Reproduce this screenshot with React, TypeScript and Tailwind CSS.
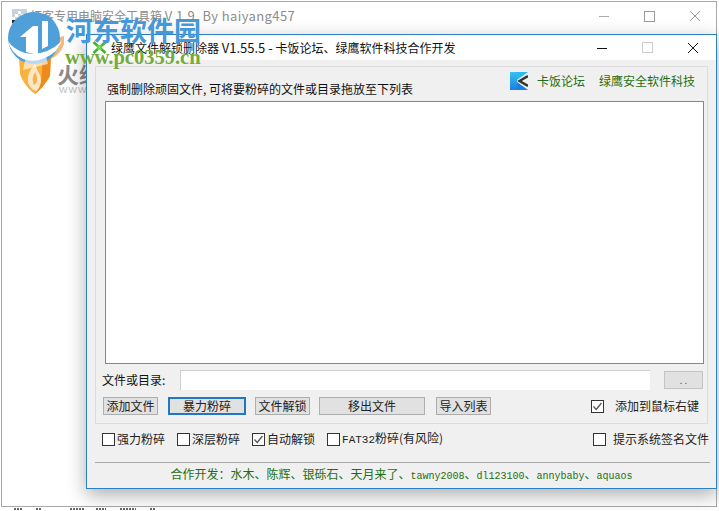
import React from "react";

const cjk = "font-['Noto_Sans_CJK_SC','Liberation_Sans',sans-serif]";
const mono = "font-['Liberation_Mono',monospace] text-[10px]";

function Btn({ w, label, primary }: { w: string; label: string; primary?: boolean }) {
  return (
    <div
      className={`${w} h-[18px] flex items-center justify-center text-[12px] text-[#222] bg-[#e1e1e1] ${
        primary ? "border-2 border-[#1f78c1]" : "border border-[#adadad]"
      }`}
    >
      {label}
    </div>
  );
}

function Check({ label, checked, gap = "gap-[2px]" }: { label: React.ReactNode; checked?: boolean; gap?: string }) {
  return (
    <div className={`flex items-center ${gap} text-[12px] text-[#222]`}>
      <div className="w-[13px] h-[13px] border border-[#333] bg-white flex items-center justify-center shrink-0">
        {checked && (
          <svg width="11" height="11" viewBox="0 0 11 11">
            <path d="M1.5 5.5 L4.2 8.5 L9.5 2" fill="none" stroke="#555" strokeWidth="1.3" />
          </svg>
        )}
      </div>
      <span className="whitespace-nowrap">{label}</span>
    </div>
  );
}

function Logo() {
  return (
    <svg className="absolute left-[3px] top-[10px]" width="62" height="84" viewBox="0 0 62 84">
      <path d="M14 44 L46 40 L45 64 Q38 76 30 82 Q19 74 15 62 Z" fill="#f9b23c" />
      <path d="M36 46 L46 42 L45 64 Q38 76 30 82 Q40 68 36 46Z" fill="#ee8a1c" />
      <path d="M30 52 Q21 62 23 71 Q27 79 32 79 Q38 71 35 63 Q32 58 30 52Z" fill="#fbe7c4" />
      <path d="M30 60 Q26 67 29 73 Q33 70 32 65Z" fill="#f7b04a" />
      <path d="M12 38 L59 24 L59 32 Q56 42 46 47 L44 40 L14 46 Z" fill="#f6b77a" />
      <circle cx="29" cy="26" r="26" fill="#4f9fd8" />
      <path d="M3 29 Q6 41 18 47 Q34 53 51 39 L57 29 Q40 45 20 41 Q8 37 3 29 Z" fill="#ffffff" />
      <path d="M21 40 L21 25 L15 25 L28 14 L33 14 L33 43 Z" fill="#ffffff" />
      <path d="M37 9 L43 9 L43 34 L37 37 Z" fill="#ffffff" />
      <path d="M18 58 L21 44 L40 41 L43 52 Z" fill="#ffffff" opacity="0.6" />
    </svg>
  );
}

export default function App() {
  return (
    <div className={`relative w-[719px] h-[511px] overflow-hidden bg-white ${cjk}`}>
      {/* background window */}
      <div className="absolute left-[1px] top-[1px] h-[506px] w-[716px] border border-[#a8a8a8] bg-white">
        <div className="flex h-[28px] items-center pl-[10px] pr-[15px]">
          <svg width="15" height="15" viewBox="0 0 15 15" className="shrink-0">
            <rect width="15" height="15" fill="#c9d2d8" />
            <path d="M0 8h3v3H0zM3 5h3v3H3zM6 8h3v3H6zM3 11h3v3H3zM9 5h3v3H9zM6 2h3v3H6z" fill="#fff" />
            <path d="M0 11h3v3H0zM6 11h3v3H6zM9 8h3v3H9z" fill="#222" />
          </svg>
          <span className="ml-[3px] text-[12px] text-[#8c8c8c] whitespace-nowrap">
            红客专用电脑安全工具箱 <span className="text-[13px] tracking-[0.4px]">V 1.9, By haiyang457</span>
          </span>
          <div className="ml-auto flex items-center gap-[34px]">
            <svg width="12" height="12" viewBox="0 0 12 12"><path d="M1 6.5h10" stroke="#aaa" /></svg>
            <svg width="11" height="11" viewBox="0 0 11 11"><rect x="0.5" y="0.5" width="10" height="10" fill="none" stroke="#999" /></svg>
            <svg width="12" height="12" viewBox="0 0 12 12"><path d="M1 1l10 10M11 1L1 11" stroke="#999" /></svg>
          </div>
        </div>
        <Logo />
        <div className="absolute left-[55px] top-[60px] text-[22px] font-bold text-[#8a8a8a] leading-none">火绒</div>
        <div className="absolute left-[57px] top-[82px] text-[9px] text-[#bdbdbd] font-['Liberation_Sans',sans-serif] tracking-[1px]">WWW.HUORONG.CN</div>
      </div>

      {/* foreground window */}
      <div className="absolute left-[86px] top-[34px] w-[631px] h-[455px] border border-[#2c7fc0] bg-[#f0f0f0] shadow-[0_6px_18px_rgba(0,0,0,0.32)] flex flex-col">
        <div className="h-[25px] bg-white flex items-center pl-[5px] shrink-0">
          <svg width="15" height="13" viewBox="0 0 15 13" className="shrink-0">
            <path d="M1.5 1 L13.5 12 M13.5 1 L1.5 12" stroke="#3fb52a" strokeWidth="2.6" />
            <path d="M5.5 4.5 L9.5 8.5 M9.5 4.5 L5.5 8.5" stroke="#7ce05a" strokeWidth="1.2" />
          </svg>
          <span className="ml-[4px] text-[12px] text-[#111] whitespace-nowrap">
            绿鹰文件解锁删除器 <span className="text-[13px]">V1.55.5 - </span>卡饭论坛、绿鹰软件科技合作开发
          </span>
          <div className="ml-auto flex items-center pr-[17px] gap-[34px]">
            <svg width="12" height="12" viewBox="0 0 12 12"><path d="M1 6.5h10" stroke="#111" /></svg>
            <svg width="11" height="11" viewBox="0 0 11 11"><rect x="0.5" y="0.5" width="10" height="10" fill="none" stroke="#ccc" /></svg>
            <svg width="12" height="12" viewBox="0 0 12 12"><path d="M1 1l10 10M11 1L1 11" stroke="#111" /></svg>
          </div>
        </div>

        <div className="mx-[8px] mt-[6px] h-[358px] border border-[#dcdcdc] pl-[10px] pr-[7px] flex flex-col">
          <div className="h-[34px] flex items-start justify-between">
            <span className="text-[12px] text-[#111] leading-[16px] mt-[14px] ml-[1px]">强制删除顽固文件, 可将要粉碎的文件或目录拖放至下列表</span>
            <div className="flex items-center text-[12px] text-[#1f6f12] mt-[5px] pr-[5px]">
              <svg width="18" height="18" viewBox="0 0 18 18" className="mr-[9px]">
                <defs>
                  <linearGradient id="kf" x1="0" y1="0" x2="0" y2="1">
                    <stop offset="0" stopColor="#35c3f0" />
                    <stop offset="1" stopColor="#1a7fe0" />
                  </linearGradient>
                </defs>
                <path d="M0 0 L7 0 L7 18 L0 18Z" fill="url(#kf)" />
                <path d="M7 0 L18 0 L7 8 Z" fill="#2fb8ee" />
                <path d="M7 10 L18 18 L7 18 Z" fill="#1a7fe0" />
                <path d="M18 4 L9.5 9 L18 14" fill="none" stroke="#333" strokeWidth="2.4" />
              </svg>
              <span>卡饭论坛</span>
              <span className="ml-[14px]">绿鹰安全软件科技</span>
            </div>
          </div>
          <div className="w-[599px] -ml-[1px] h-[263px] border border-[#828790] bg-white shrink-0" />
          <div className="h-[27px] flex items-center -ml-[4px] mt-[2px] text-[12px] text-[#111]">
            <span className="w-[78px] shrink-0">文件或目录:</span>
            <div className="w-[470px] h-[20px] shrink-0 bg-white border-l border-t border-[#d0d0d0]" />
            <div className="ml-[14px] w-[39px] h-[18px] shrink-0 bg-[#e1e1e1] border border-[#c4c4c4] flex items-center justify-center text-[#555] text-[10px]">. .</div>
          </div>
          <div className="h-[18px] flex items-center -ml-[3px] mt-[4px] text-[12px]">
            <Btn w="w-[55px]" label="添加文件" />
            <div className="ml-[10px]"><Btn w="w-[78px]" label="暴力粉碎" primary /></div>
            <div className="ml-[9px]"><Btn w="w-[55px]" label="文件解锁" /></div>
            <div className="ml-[9px]"><Btn w="w-[106px]" label="移出文件" /></div>
            <div className="ml-[11px]"><Btn w="w-[55px]" label="导入列表" /></div>
            <div className="ml-auto pr-[1px]">
              <Check label="添加到鼠标右键" checked gap="gap-[11px]" />
            </div>
          </div>
        </div>

        <div className="ml-[15px] mr-[7px] mt-[7px] h-[16px] flex items-center gap-[12px]">
          <Check label="强力粉碎" />
          <Check label="深层粉碎" />
          <Check label="自动解锁" checked />
          <Check label={<><span className="font-['Liberation_Mono',monospace] text-[11px]">FAT32</span>粉碎(有风险)</>} />
          <div className="ml-auto">
            <Check label="提示系统签名文件" gap="gap-[7px]" />
          </div>
        </div>

        <div className="ml-[8px] mr-[6px] mt-[15px] border-t border-[#a8a8a8] pt-[2px] flex justify-center">
          <span className="text-[12px] text-[#1d6f12] whitespace-nowrap -translate-x-[1px]">
            合作开发：水木、陈辉、银砾石、天月来了、
            <span className={mono}>tawny2008</span>、
            <span className={mono}>dl123100</span>、
            <span className={mono}>annybaby</span>、
            <span className={mono}>aquaos</span>
          </span>
        </div>
      </div>

      {/* watermark */}
      <div className="absolute left-[66px] top-[13px] text-[27px] leading-[34px] font-bold text-[#4598da] whitespace-nowrap">河东软件园</div>
      <div className="absolute left-[65px] top-[45px] text-[20.5px] leading-[24px] font-bold text-[#73ab3c] font-['Liberation_Serif',serif] whitespace-nowrap">www.pc0359.cn</div>

      {/* clipped edges of what lies behind the window */}
      <svg className="absolute left-0 bottom-0" width="200" height="3" viewBox="0 0 200 3">
        <path d="M14 1h8M36 1h6M70 1h14M96 1h10M120 1h16M150 1h6" stroke="#666" strokeWidth="2" strokeDasharray="2 1" />
      </svg>
    </div>
  );
}
